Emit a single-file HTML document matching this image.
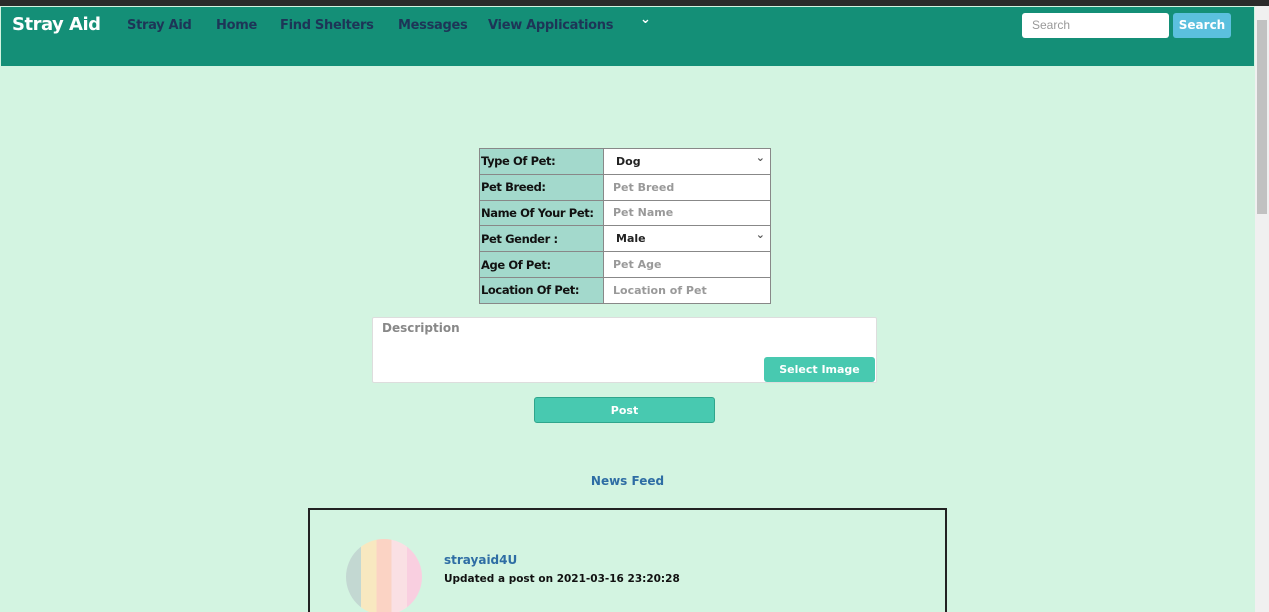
<!DOCTYPE html>
<html><head><style>
*{box-sizing:border-box;margin:0;padding:0}
html,body{width:1269px;height:612px;overflow:hidden}
body{background:#d3f4e1;font-family:"DejaVu Sans","Liberation Sans",sans-serif;position:relative}
.top{position:absolute;left:0;top:0;width:1269px;height:6px;background:#2b2b2b}
.nav{position:absolute;left:1px;top:7px;width:1253px;height:59px;background:#148f77}
.sb{position:absolute;left:1255px;top:6px;width:14px;height:606px;background:#f0f0f0}
.sb .t{position:absolute;left:2px;top:14px;width:10px;height:194px;background:#c1c1c1}
.a{position:absolute;font-weight:bold;font-size:13px;letter-spacing:-0.3px;color:#1d3557;top:18px;white-space:nowrap}
.brand{position:absolute;left:12px;top:14px;font-size:18px;font-weight:bold;color:#fff;letter-spacing:-0.5px}
.sin{position:absolute;left:1022px;top:13px;width:147px;height:25px;background:#fff;border-radius:3px;font-family:"Liberation Sans",sans-serif;font-size:12px;color:#999;padding:5px 10px}
.sbtn{position:absolute;left:1173px;top:13px;width:58px;height:25px;background:#5bc0de;border-radius:3px;color:#fff;font-weight:bold;font-size:12px;text-align:center;line-height:25px}
table{position:absolute;left:479px;top:148px;border-collapse:collapse;border:1px solid #555;table-layout:fixed;width:291px}
td{height:25.8px;border:1px solid #888;font-size:11.5px;font-weight:bold;padding:0 0 0 1px;white-space:nowrap;overflow:hidden;letter-spacing:-0.4px}
td.l{width:124px;background:#a3d9cc;color:#111}
td.v{width:167px;background:#fff;color:#999;padding-left:9px;font-size:11px;letter-spacing:0}
td.s{color:#222;padding-left:12px;position:relative}
td.s:after{content:"⌄";position:absolute;right:5px;top:2px;color:#555;font-size:11px}
.desc{position:absolute;left:372px;top:317px;width:505px;height:66px;background:#fff;border:1px solid #ddd;border-radius:2px;padding:3px 9px;font-size:12px;font-weight:bold;color:#888}
.sel{position:absolute;left:764px;top:357px;width:111px;height:25px;background:#48c9b0;border-radius:3px;color:#fff;font-size:11px;font-weight:bold;text-align:center;line-height:25px}
.post{position:absolute;left:534px;top:397px;width:181px;height:26px;background:#48c9b0;border:1px solid #2fa58c;border-radius:3px;color:#fff;font-size:11px;font-weight:bold;text-align:center;line-height:25px}
.nf{position:absolute;left:0;width:1255px;top:474px;text-align:center;font-size:12px;font-weight:bold;color:#2e6da4}
.card{position:absolute;left:308px;top:508px;width:639px;height:110px;border:2px solid #222}
.av{position:absolute;left:346px;top:539px;width:76px;height:76px;border-radius:50%;overflow:hidden;background:linear-gradient(90deg,#c3d8d2 0 20%,#f8e8c0 20% 40%,#fbd3c4 40% 60%,#fae0e4 60% 80%,#f9cfe0 80%)}
.un{position:absolute;left:444px;top:553px;font-size:12px;font-weight:bold;color:#2e6da4}
.up{position:absolute;left:444px;top:573px;font-size:10.5px;font-weight:bold;color:#111}
</style></head><body>
<div class="top"></div>
<div class="nav"></div>
<div class="brand">Stray Aid</div>
<div class="a" style="left:127px">Stray Aid</div>
<div class="a" style="left:216px">Home</div>
<div class="a" style="left:280px">Find Shelters</div>
<div class="a" style="left:398px">Messages</div>
<div class="a" style="left:488px">View Applications</div>
<div class="a" style="left:640px;color:#fff;top:12px">⌄</div>
<div class="sin">Search</div>
<div class="sbtn">Search</div>
<div class="sb"><div class="t"></div></div>
<table>
<tr><td class="l">Type Of Pet:</td><td class="v s">Dog</td></tr>
<tr><td class="l">Pet Breed:</td><td class="v">Pet Breed</td></tr>
<tr><td class="l">Name Of Your Pet:</td><td class="v">Pet Name</td></tr>
<tr><td class="l">Pet Gender :</td><td class="v s">Male</td></tr>
<tr><td class="l">Age Of Pet:</td><td class="v">Pet Age</td></tr>
<tr><td class="l">Location Of Pet:</td><td class="v">Location of Pet</td></tr>
</table>
<div class="desc">Description</div>
<div class="sel">Select Image</div>
<div class="post">Post</div>
<div class="nf">News Feed</div>
<div class="card"></div>
<div class="av"></div>
<div class="un">strayaid4U</div>
<div class="up">Updated a post on 2021-03-16 23:20:28</div>
</body></html>
